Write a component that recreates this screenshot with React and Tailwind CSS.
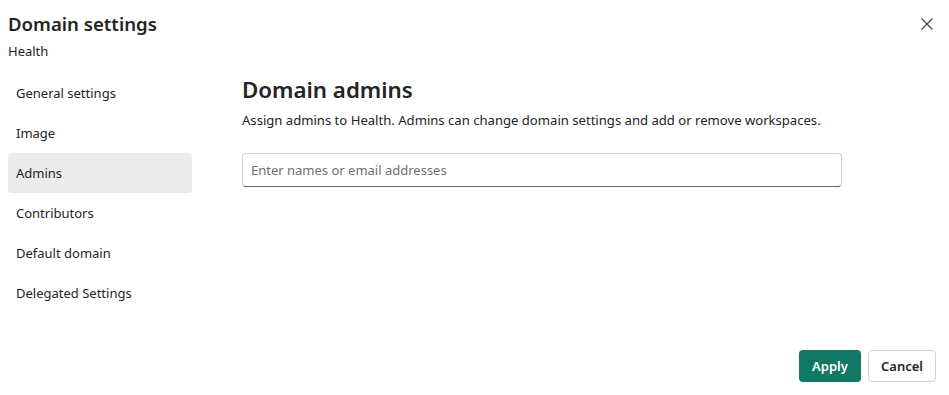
export default function App() {
  const items = ["General settings", "Image", "Admins", "Contributors", "Default domain", "Delegated Settings"];
  return (
    <div className="w-[949px] h-[395px] bg-white flex flex-col text-[#242424]" style={{ fontFamily: '"Segoe UI", "Noto Sans", sans-serif' }}>
      <div className="flex justify-between pl-2 pr-[15px] pt-[10px]">
        <div className="flex flex-col">
          <div className="text-[18.6px] leading-[28px] font-semibold">Domain settings</div>
          <div className="text-[13px] leading-[20px] mt-[3px]">Health</div>
        </div>
        <button className="mt-[7px] w-[14px] h-[14px] flex items-center justify-center text-[#424242]">
          <svg width="12" height="12" viewBox="0 0 12 12" fill="none" stroke="currentColor" strokeWidth="1.1">
            <path d="M0.5 0.5L11.5 11.5M11.5 0.5L0.5 11.5" />
          </svg>
        </button>
      </div>
      <div className="flex flex-1 pt-[12px]">
        <div className="w-[184px] ml-2 flex flex-col">
          {items.map((t) => (
            <div key={t} className={`h-[40px] flex items-center px-2 pt-[2px] text-[13px] rounded-[4px] ${t === "Admins" ? "bg-[#ebebeb]" : ""}`}>{t}</div>
          ))}
        </div>
        <div className="ml-[50px] flex flex-col">
          <div className="text-[22.3px] leading-[32px] font-semibold mt-[1px]">Domain admins</div>
          <div className="text-[13.1px] leading-[20px] mt-[4px]">Assign admins to Health. Admins can change domain settings and add or remove workspaces.</div>
          <div className="mt-[23px] w-[600px] h-[34px] border border-[#d1d1d1] border-b-[#616161] rounded-[4px] flex items-center px-2 pt-[1px] text-[13px] text-[#707070]">
            Enter names or email addresses
          </div>
        </div>
      </div>
      <div className="flex justify-end gap-[7px] pr-[13px] pb-[13px]">
        <button className="h-[32px] w-[62px] pt-[1px] bg-[#117865] text-white font-semibold text-[13px] rounded-[4px]">Apply</button>
        <button className="h-[32px] w-[68px] pt-[1px] bg-white border border-[#d1d1d1] font-semibold text-[13px] rounded-[4px]">Cancel</button>
      </div>
    </div>
  );
}
